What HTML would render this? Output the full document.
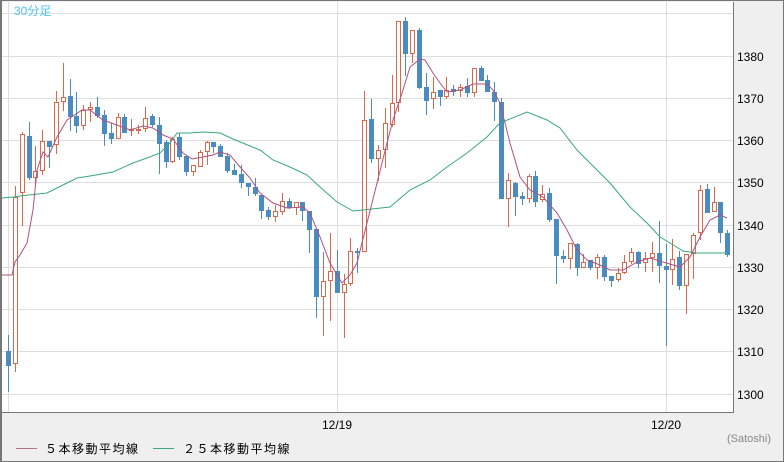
<!DOCTYPE html>
<html><head><meta charset="utf-8"><style>
html,body{margin:0;padding:0;background:#efefef}
svg{display:block}
text{font-family:"Liberation Sans","Noto Sans CJK JP",sans-serif}
</style></head><body>
<svg width="784" height="462" viewBox="0 0 784 462" xmlns="http://www.w3.org/2000/svg" shape-rendering="crispEdges">
<rect x="0" y="0" width="784" height="462" fill="#efefef"/>
<rect x="2" y="2" width="731" height="410" fill="#fff"/>
<g stroke="#dedede" stroke-width="1">
<line x1="2" y1="13.5" x2="733" y2="13.5"/><line x1="2" y1="56.5" x2="733" y2="56.5"/><line x1="2" y1="98.5" x2="733" y2="98.5"/><line x1="2" y1="140.5" x2="733" y2="140.5"/><line x1="2" y1="182.5" x2="733" y2="182.5"/><line x1="2" y1="225.5" x2="733" y2="225.5"/><line x1="2" y1="267.5" x2="733" y2="267.5"/><line x1="2" y1="309.5" x2="733" y2="309.5"/><line x1="2" y1="351.5" x2="733" y2="351.5"/><line x1="2" y1="394.5" x2="733" y2="394.5"/>
<line x1="8.5" y1="2" x2="8.5" y2="412"/><line x1="337.5" y1="2" x2="337.5" y2="412"/><line x1="666.5" y1="2" x2="666.5" y2="412"/>
</g>
<g stroke="#777" stroke-width="1" fill="none">
<rect x="0.5" y="0.5" width="783" height="461"/><line x1="1.5" y1="0" x2="1.5" y2="462"/>
<line x1="2" y1="412.5" x2="733" y2="412.5"/><line x1="733.5" y1="2" x2="733.5" y2="413"/>
</g>
<text x="14" y="15" font-size="12" fill="#4cc3f0">30分足</text>
<g id="c" stroke-width="1">
<script></script>
</g>
<g id="candles"></g>
<g font-size="12" fill="#000">
<text x="737" y="61">1380</text><text x="737" y="103">1370</text><text x="737" y="145">1360</text><text x="737" y="187">1350</text><text x="737" y="230">1340</text><text x="737" y="272">1330</text><text x="737" y="314">1320</text><text x="737" y="356">1310</text><text x="737" y="399">1300</text>
<text x="337" y="429" text-anchor="middle">12/19</text><text x="666" y="429" text-anchor="middle">12/20</text>
</g>
<text x="771" y="442" font-size="11" fill="#888" text-anchor="end">(Satoshi)</text>
<line x1="16" y1="448.5" x2="37" y2="448.5" stroke="#b8708a"/>
<text x="45" y="453" font-size="12" fill="#000" letter-spacing="1.5">５本移動平均線</text>
<line x1="153" y1="448.5" x2="174" y2="448.5" stroke="#3aa878"/>
<text x="183" y="453" font-size="12" fill="#000" letter-spacing="1.5">２５本移動平均線</text>
<g id="cd"></g>
</svg>
<script>
var D=[[8,'d',351,366,335,392],[15,'u',197,364,186,372],[22,'u',134,193,132,226],[29,'d',136,178,122,180],[35,'u',171,178,146,186],[42,'u',141,171,130,175],[49,'d',141,147,141,168],[56,'u',102,145,91,154],[63,'u',97,102,63,111],[70,'d',96,117,79,131],[76,'d',116,126,92,133],[83,'u',110,126,105,130],[90,'u',107,110,102,122],[97,'d',107,116,97,118],[104,'d',115,134,110,146],[111,'d',133,139,123,144],[118,'u',117,139,113,139],[124,'d',117,133,114,133],[131,'u',129,131,119,136],[138,'u',129,131,125,134],[145,'u',118,129,107,132],[152,'d',116,125,114,127],[159,'d',125,144,117,174],[166,'d',142,162,140,168],[172,'u',139,162,137,163],[179,'d',137,157,133,160],[186,'d',156,172,156,176],[193,'u',165,172,165,176],[200,'u',152,167,150,167],[207,'u',142,152,141,165],[213,'d',142,147,142,153],[220,'d',146,157,144,157],[227,'d',156,171,153,173],[234,'d',170,175,164,175],[241,'d',174,183,165,188],[248,'d',183,187,183,196],[255,'d',187,194,178,196],[261,'d',195,211,195,219],[268,'d',210,217,207,220],[275,'u',211,217,205,222],[282,'u',201,212,193,215],[289,'d',201,208,198,209],[296,'u',202,208,202,215],[302,'d',202,211,202,221],[309,'d',211,230,211,253],[316,'d',229,297,229,318],[323,'u',281,297,252,336],[330,'u',271,281,233,321],[337,'d',271,293,250,293],[344,'u',284,293,274,338],[350,'u',251,284,238,286],[357,'d',251,253,248,273],[364,'u',120,252,91,252],[371,'d',119,159,99,163],[378,'u',150,159,145,181],[385,'u',123,150,108,168],[392,'u',103,125,75,127],[398,'u',21,103,21,112],[405,'d',21,54,17,76],[412,'u',30,54,30,63],[419,'d',30,88,28,89],[426,'d',87,101,73,115],[433,'u',92,99,77,109],[440,'d',90,97,90,106],[446,'u',90,97,77,99],[453,'d',89,92,85,96],[460,'u',87,91,84,97],[467,'d',86,93,78,97],[474,'u',68,93,68,97],[481,'d',68,81,66,81],[487,'d',80,92,75,92],[494,'d',92,102,82,121],[501,'d',102,199,98,199],[508,'u',180,199,173,227],[515,'d',183,197,182,216],[522,'d',196,199,192,205],[529,'u',176,199,174,203],[535,'d',176,202,171,207],[542,'u',194,200,185,202],[549,'d',193,220,188,222],[556,'d',219,256,219,284],[563,'d',256,259,250,263],[570,'u',243,259,243,269],[577,'d',244,268,243,276],[583,'u',262,268,254,268],[590,'d',260,268,260,270],[597,'u',257,268,254,279],[604,'d',257,277,255,281],[611,'d',276,281,276,287],[618,'u',273,280,268,282],[624,'u',262,273,255,274],[631,'u',252,262,248,264],[638,'d',252,264,251,268],[645,'u',258,263,252,272],[652,'u',253,258,242,272],[659,'d',253,266,221,283],[666,'d',266,270,244,346],[672,'u',259,270,239,285],[679,'d',257,286,251,290],[686,'u',254,286,254,314],[693,'u',235,254,233,279],[700,'u',190,233,185,240],[707,'d',189,213,184,213],[714,'u',202,212,187,212],[720,'d',202,233,202,243],[727,'d',233,255,230,257]];
var s='';
D.forEach(function(c){var x=c[0],col=c[1]=='u'?'#d9694a':'#4a8bc0';
s+='<line x1="'+(x+.5)+'" y1="'+c[4]+'" x2="'+(x+.5)+'" y2="'+c[5]+'" stroke="'+col+'"/>';
if(c[1]=='u'){s+='<rect x="'+(x-1.5)+'" y="'+(c[2]+.5)+'" width="4" height="'+Math.max(1,c[3]-c[2]-1)+'" fill="#fff" stroke="'+col+'"/>';}
else{s+='<rect x="'+(x-2)+'" y="'+c[2]+'" width="5" height="'+Math.max(1,c[3]-c[2])+'" fill="'+col+'"/>';}
});
var ma5="2,275 12,275 15,262 20,255 27,243 33,210 37,170 43,152 48,157 57,137 67,120 82,110 90,110 103,120 117,125 130,130 143,126 153,128 163,135 173,139 183,153 192,159 203,157 213,155 220,152 230,155 240,167 250,178 260,193 273,203 287,208 303,207 310,213 320,237 330,263 342,283 350,275 357,263 367,223 377,183 387,143 393,120 403,90 410,67 420,59 425,60 433,73 440,83 447,92 460,90 473,84 487,84 493,90 500,103 510,143 520,177 530,190 543,197 557,213 567,230 577,250 587,260 600,265 610,270 623,270 637,262 650,258 663,262 680,267 690,257 700,237 710,220 720,215 727,218";
var ma25="2,198 14,197 20,196 47,193 63,185 77,178 90,176 113,172 133,163 147,158 160,153 170,143 177,133 190,133 203,132 220,133 233,139 250,146 260,150 273,160 290,167 307,175 320,187 337,202 353,211 363,210 390,207 410,190 430,180 447,167 467,153 487,137 497,126 500,123 527,112 547,120 560,128 577,150 590,163 610,183 630,207 647,223 660,237 670,243 683,251 697,253 727,253";
s+='<polyline points="'+ma25+'" fill="none" stroke="#3aa878" stroke-width="1" shape-rendering="auto"/>';
s+='<polyline points="'+ma5+'" fill="none" stroke="#b0507f" stroke-width="1" shape-rendering="auto"/>';
document.getElementById('cd').innerHTML=s;
</script>
</body></html>
